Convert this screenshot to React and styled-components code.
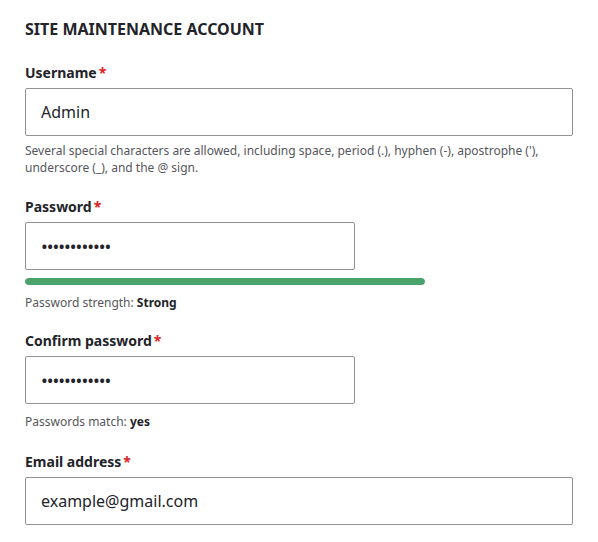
import React from 'react'
import styled, { createGlobalStyle } from 'styled-components'

const GlobalStyle = createGlobalStyle`
  html, body {
    margin: 0;
    padding: 0;
    background: #ffffff;
  }
  body {
    font-family: "Noto Sans", "Open Sans", sans-serif;
    color: #232429;
  }
`

const Page = styled.div`
  padding: 18px 25px 0 25px;
  width: 548px;
`

const Heading = styled.h2`
  margin: 0 0 24px 0;
  font-size: 16px;
  line-height: 22px;
  font-weight: 700;
  text-transform: uppercase;
  color: #232429;
`

const Field = styled.div`
  display: flex;
  flex-direction: column;
  align-items: flex-start;
  margin-bottom: ${p => p.$gap || 22}px;
`

const Label = styled.label`
  display: block;
  font-size: 14px;
  line-height: 18px;
  font-weight: 700;
  margin-bottom: 6px;
  color: #232429;
`

const Required = styled.span`
  color: #dc2323;
  margin-left: 2px;
`

const Input = styled.input`
  box-sizing: border-box;
  width: ${p => (p.$short ? '330px' : '100%')};
  height: 48px;
  padding: 0 15px;
  border: 1px solid #919297;
  border-radius: 2px;
  font-family: inherit;
  font-size: 16px;
  color: #232429;
  background: #fff;
  outline: none;

  &[type='password'] {
    font-size: 18px;
    letter-spacing: -1px;
  }
`

const Description = styled.div`
  margin-top: 6px;
  font-size: 12px;
  line-height: 17px;
  color: #55565b;
`

const Strength = styled.div`
  width: 400px;
  height: 7px;
  margin-top: 8px;
  border-radius: 4px;
  background: #e0e0e0;
  overflow: hidden;
`

const StrengthFill = styled.div`
  height: 100%;
  background: #4aa36b;
  border-radius: 4px;
`

const Status = styled.div`
  margin-top: 9px;
  font-size: 12px;
  line-height: 17px;
  color: #55565b;

  strong {
    color: #232429;
    font-weight: 700;
  }
`

export default function App() {
  return (
    <Page>
      <GlobalStyle />
      <Heading>Site maintenance account</Heading>

      <Field>
        <Label>Username<Required>*</Required></Label>
        <Input defaultValue="Admin" />
        <Description>
          Several special characters are allowed, including space, period (.), hyphen (-), apostrophe ('),
          underscore (_), and the @ sign.
        </Description>
      </Field>

      <Field $gap={21}>
        <Label>Password<Required>*</Required></Label>
        <Input $short type="password" defaultValue="Admin1234567" />
        <Strength>
          <StrengthFill style={{ width: '100%' }} />
        </Strength>
        <Status>Password strength: <strong>Strong</strong></Status>
      </Field>

      <Field $gap={23}>
        <Label>Confirm password<Required>*</Required></Label>
        <Input $short type="password" defaultValue="Admin1234567" />
        <Status>Passwords match: <strong>yes</strong></Status>
      </Field>

      <Field>
        <Label>Email address<Required>*</Required></Label>
        <Input defaultValue="example@gmail.com" />
      </Field>
    </Page>
  )
}
